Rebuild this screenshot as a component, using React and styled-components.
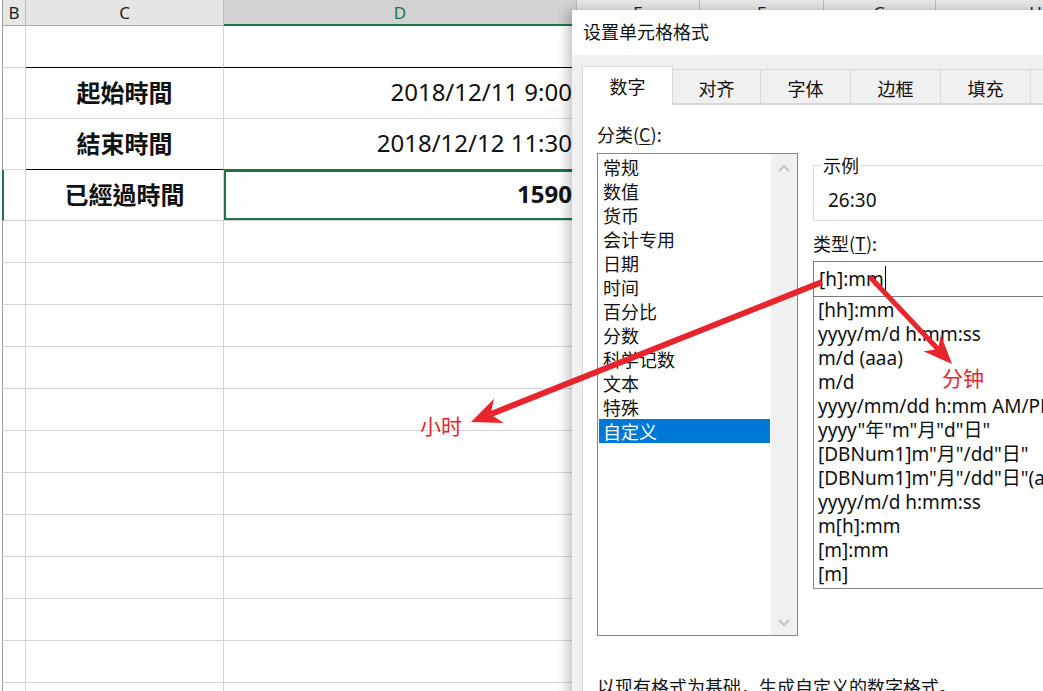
import React from "react";
import styled, { createGlobalStyle } from "styled-components";

const COLS = "24px 198px 353px 123px 124px 112px 200px";
const GRID = "#d4d4d4";
const GREEN = "#217346";
const RED = "#e8252d";

const GlobalStyle = createGlobalStyle`
  body {
    margin: 0;
    background: #ffffff;
    overflow: hidden;
    font-family: "Noto Sans", "Noto Sans CJK SC", sans-serif;
  }
`;

const Page = styled.div`
  position: relative;
  width: 1043px;
  height: 691px;
  overflow: hidden;
`;

/* ---------- spreadsheet ---------- */

const Sheet = styled.div`
  display: flex;
  flex-direction: column;
  padding-left: 2px;
`;

const Row = styled.div`
  display: grid;
  grid-template-columns: ${COLS};
  height: ${(p) => p.h}px;
`;

const HeadCell = styled.div`
  display: flex;
  align-items: center;
  justify-content: center;
  box-sizing: border-box;
  background: ${(p) => (p.active ? "#d2d2d2" : "#e6e6e6")};
  color: ${(p) => (p.active ? GREEN : "#222")};
  border-right: 1px solid #bdbdbd;
  border-bottom: ${(p) => (p.active ? `2px solid ${GREEN}` : "1px solid #ababab")};
  border-left: ${(p) => (p.first ? "1px solid #9e9e9e" : "none")};
  font-family: "Noto Sans", sans-serif;
  font-size: 17px;
`;

const Cell = styled.div`
  display: flex;
  align-items: center;
  justify-content: ${(p) => p.align || "center"};
  box-sizing: border-box;
  padding-right: ${(p) => (p.align === "flex-end" ? "4px" : "0")};
  padding-bottom: 4px;
  border-right: 1px solid ${GRID};
  border-bottom: 1px solid ${(p) => p.bottom || GRID};
  border-left: ${(p) => (p.first ? `${p.mark ? 2 : 1}px solid ${p.mark ? GREEN : "#9e9e9e"}` : "none")};
  box-shadow: ${(p) => (p.selected ? `inset 0 0 0 2px ${GREEN}` : "none")};
  font-family: "Noto Sans", "Noto Sans CJK TC", sans-serif;
  font-size: 24px;
  font-weight: ${(p) => (p.bold ? 700 : 400)};
  color: #111;
  white-space: nowrap;
  overflow: hidden;
`;

/* ---------- dialog ---------- */

const Dialog = styled.div`
  position: absolute;
  left: 572px;
  top: 10px;
  width: 490px;
  height: 700px;
  background: #f0f0f0;
  box-shadow: -5px 0 10px rgba(0, 0, 0, 0.22);
  display: flex;
  flex-direction: column;
  font-family: "Noto Sans CJK SC", sans-serif;
  color: #111;
`;

const TitleBar = styled.div`
  height: 45px;
  line-height: 43px;
  padding-left: 11px;
  background: #ffffff;
  font-size: 18px;
`;

const Body = styled.div`
  flex: 1;
  display: flex;
  flex-direction: column;
  padding: 11px 0 0 10px;
`;

const Tabs = styled.div`
  display: flex;
  align-items: flex-end;
  height: 38px;
  position: relative;
  z-index: 1;
`;

const Tab = styled.div`
  flex-shrink: 0;
  box-sizing: border-box;
  width: ${(p) => p.w}px;
  height: ${(p) => (p.active ? 39 : 35)}px;
  display: flex;
  align-items: center;
  justify-content: center;
  padding-top: ${(p) => (p.active ? 0 : 3)}px;
  background: ${(p) => (p.active ? "#ffffff" : "#f0f0f0")};
  border: 1px solid #d9d9d9;
  border-left: ${(p) => (p.active ? "1px solid #d9d9d9" : "none")};
  border-bottom: ${(p) => (p.active ? "none" : "1px solid #d9d9d9")};
  font-size: 18px;
  margin-bottom: ${(p) => (p.active ? -1 : 0)}px;
`;

const Panel = styled.div`
  flex: 1;
  display: flex;
  gap: 15px;
  background: #ffffff;
  border: 1px solid #d9d9d9;
  padding: 17px 0 0 14px;
`;

const Column = styled.div`
  display: flex;
  flex-direction: column;
  flex: ${(p) => (p.w ? "none" : 1)};
  width: ${(p) => (p.w ? `${p.w}px` : "auto")};
  padding-top: ${(p) => p.top || 0}px;
`;

const Label = styled.div`
  height: 24px;
  line-height: 24px;
  font-size: 18px;
  margin-top: ${(p) => p.mt || 0}px;
  margin-bottom: ${(p) => p.mb || 0}px;
  white-space: nowrap;

  u {
    text-underline-offset: 2px;
  }
`;

const ListBox = styled.div`
  display: flex;
  width: 201px;
  height: 483px;
  box-sizing: border-box;
  border: 1px solid #828790;
`;

const ListItems = styled.div`
  flex: 1;
  padding: 1px;
`;

const CatItem = styled.div`
  height: 24px;
  line-height: 24px;
  padding-left: 4px;
  font-size: 18px;
  background: ${(p) => (p.selected ? "#0078d7" : "transparent")};
  color: ${(p) => (p.selected ? "#ffffff" : "#111")};
`;

const ScrollBar = styled.div`
  width: 26px;
  background: #f0f0f0;
  display: flex;
  flex-direction: column;
  justify-content: space-between;
  align-items: center;
  padding: 10px 0 8px;
`;

const Sample = styled.fieldset`
  margin: 0;
  padding: 0 0 0 8px;
  height: 68px;
  box-sizing: border-box;
  border: 1px solid #dcdcdc;
  border-right: none;
`;

const Legend = styled.legend`
  padding: 0 1px;
  height: 24px;
  line-height: 24px;
  font-size: 18px;
`;

const SampleValue = styled.div`
  margin: 11px 0 0 6px;
  height: 24px;
  line-height: 24px;
  font-family: "Noto Sans", sans-serif;
  font-size: 19px;
`;

const TypeInput = styled.div`
  display: flex;
  align-items: center;
  height: 36px;
  box-sizing: border-box;
  border: 1px solid #7a7a7a;
  border-right: none;
  padding-left: 5px;
  font-family: "Noto Sans", sans-serif;
  font-size: 19px;
`;

const Caret = styled.span`
  display: inline-block;
  width: 1px;
  height: 27px;
  margin-left: 1px;
  background: #000;
`;

const TypeList = styled.div`
  height: 292px;
  box-sizing: border-box;
  border: 1px solid #828790;
  border-top: none;
  border-right: none;
  padding-top: 1px;
`;

const TypeItem = styled.div`
  height: 24px;
  line-height: 24px;
  padding-left: 4px;
  white-space: nowrap;
  font-family: "Noto Sans", "Noto Sans CJK SC", sans-serif;
  font-size: 19px;
`;

/* ---------- annotations ---------- */

const Overlay = styled.svg`
  position: absolute;
  left: 0;
  top: 0;
  pointer-events: none;
`;

const Note = styled.span`
  position: absolute;
  left: ${(p) => p.x}px;
  top: ${(p) => p.y}px;
  color: ${RED};
  font-family: "Noto Sans CJK SC", sans-serif;
  font-size: 21px;
  line-height: 24px;
`;

const Chevron = ({ up }) => (
  <svg width="12" height="8" viewBox="0 0 12 8">
    <path
      d={up ? "M1 7 L6 2 L11 7" : "M1 1 L6 6 L11 1"}
      fill="none"
      stroke="#c2c2c2"
      strokeWidth="2"
    />
  </svg>
);

const arrow = (x1, y1, x2, y2, len, half, width) => {
  const dx = x2 - x1;
  const dy = y2 - y1;
  const d = Math.hypot(dx, dy);
  const ux = dx / d;
  const uy = dy / d;
  const bx = x2 - ux * len;
  const by = y2 - uy * len;
  const nx = -uy * half;
  const ny = ux * half;
  const notchX = x2 - ux * len * 0.7;
  const notchY = y2 - uy * len * 0.7;
  const pts = `${x2},${y2} ${bx + nx},${by + ny} ${notchX},${notchY} ${bx - nx},${by - ny}`;
  return (
    <g>
      <line x1={x1} y1={y1} x2={notchX} y2={notchY} stroke={RED} strokeWidth={width} />
      <polygon points={pts} fill={RED} />
    </g>
  );
};

const headers = ["B", "C", "D", "E", "F", "G", "H"];
const categories = ["常规", "数值", "货币", "会计专用", "日期", "时间", "百分比", "分数", "科学记数", "文本", "特殊", "自定义"];
const types = [
  "[hh]:mm",
  "yyyy/m/d h:mm:ss",
  "m/d (aaa)",
  "m/d",
  "yyyy/mm/dd h:mm AM/PM",
  'yyyy"年"m"月"d"日"',
  '[DBNum1]m"月"/dd"日"',
  '[DBNum1]m"月"/dd"日"(aaa)',
  "yyyy/m/d h:mm:ss",
  "m[h]:mm",
  "[m]:mm",
  "[m]",
];
const tabs = [
  ["数字", 91],
  ["对齐", 88],
  ["字体", 90],
  ["边框", 90],
  ["填充", 90],
  ["", 90],
];

const EmptyCells = ({ first }) => (
  <>
    <Cell first={first} />
    <Cell />
    <Cell />
    <Cell />
    <Cell />
    <Cell />
    <Cell />
  </>
);

export default function App() {
  const blanks = Array.from({ length: 12 });
  return (
    <Page>
      <GlobalStyle />
      <Sheet>
        <Row h={26}>
          {headers.map((h, i) => (
            <HeadCell key={h} first={i === 0} active={h === "D"}>
              {h}
            </HeadCell>
          ))}
        </Row>
        <Row h={42}>
          <Cell first />
          <Cell bottom="#000" />
          <Cell bottom="#000" />
          <Cell />
          <Cell />
          <Cell />
          <Cell />
        </Row>
        <Row h={51}>
          <Cell first />
          <Cell bold>起始時間</Cell>
          <Cell align="flex-end">2018/12/11 9:00</Cell>
          <Cell />
          <Cell />
          <Cell />
          <Cell />
        </Row>
        <Row h={51}>
          <Cell first />
          <Cell bold bottom="#000">結束時間</Cell>
          <Cell align="flex-end" bottom={GREEN}>2018/12/12 11:30</Cell>
          <Cell />
          <Cell />
          <Cell />
          <Cell />
        </Row>
        <Row h={51}>
          <Cell first mark />
          <Cell bold>已經過時間</Cell>
          <Cell align="flex-end" bold selected>1590</Cell>
          <Cell />
          <Cell />
          <Cell />
          <Cell />
        </Row>
        {blanks.map((_, i) => (
          <Row h={42} key={i}>
            <EmptyCells first />
          </Row>
        ))}
      </Sheet>

      <Dialog>
        <TitleBar>设置单元格格式</TitleBar>
        <Body>
          <Tabs>
            {tabs.map(([t, w], i) => (
              <Tab key={i} w={w} active={i === 0}>
                {t}
              </Tab>
            ))}
          </Tabs>
          <Panel>
            <Column w={201}>
              <Label mb={7}>
                分类(<u>C</u>):
              </Label>
              <ListBox>
                <ListItems>
                  {categories.map((c) => (
                    <CatItem key={c} selected={c === "自定义"}>
                      {c}
                    </CatItem>
                  ))}
                </ListItems>
                <ScrollBar>
                  <Chevron up />
                  <Chevron />
                </ScrollBar>
              </ListBox>
              <Label mt={38}>以现有格式为基础，生成自定义的数字格式。</Label>
            </Column>
            <Column top={31}>
              <Sample>
                <Legend>示例</Legend>
                <SampleValue>26:30</SampleValue>
              </Sample>
              <Label mt={10} mb={6}>
                类型(<u>T</u>):
              </Label>
              <TypeInput>
                [h]:mm
                <Caret />
              </TypeInput>
              <TypeList>
                {types.map((t, i) => (
                  <TypeItem key={i}>{t}</TypeItem>
                ))}
              </TypeList>
            </Column>
          </Panel>
        </Body>
      </Dialog>

      <Overlay width="1043" height="691">
        {arrow(822, 282, 471, 422, 30, 13, 6)}
        {arrow(870, 277, 952, 364, 29, 12, 5)}
      </Overlay>
      <Note x={420} y={413}>小时</Note>
      <Note x={942} y={365}>分钟</Note>
    </Page>
  );
}
